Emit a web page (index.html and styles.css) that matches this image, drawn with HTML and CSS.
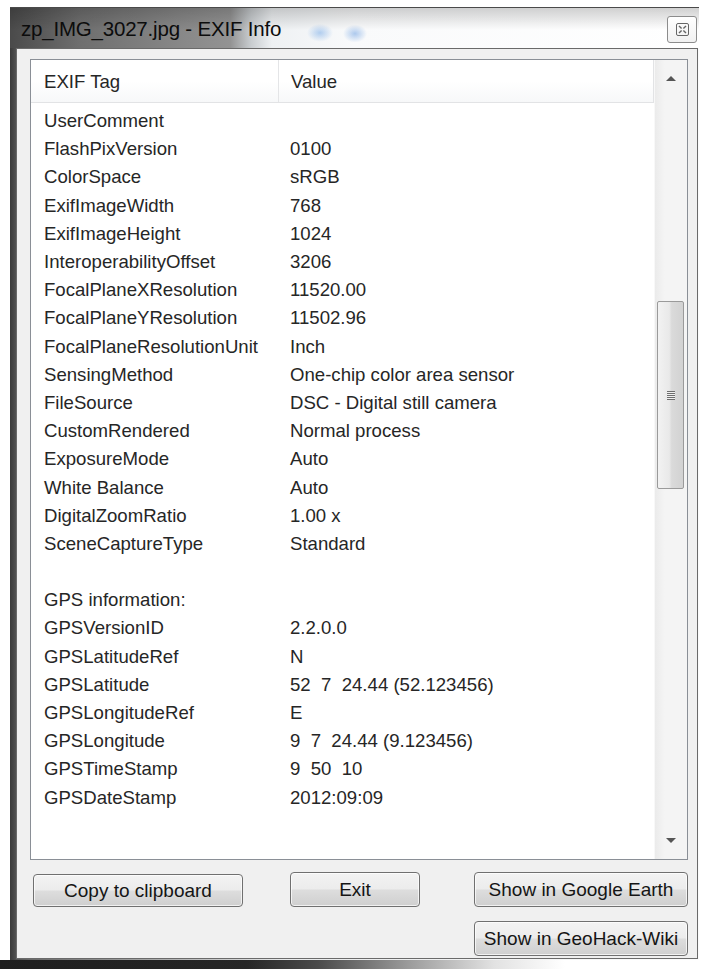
FILE: index.html
```html
<!DOCTYPE html>
<html lang="en">
<head>
<meta charset="utf-8">
<title>zp_IMG_3027.jpg - EXIF Info</title>
<link rel="stylesheet" href="styles.css">
</head>
<body>
<div class="window">
  <div class="titlebar">
    <span class="title">zp_IMG_3027.jpg - EXIF Info</span>
    <button class="close" type="button" aria-label="Close">
      <svg width="13" height="13" viewBox="0 0 13 13">
        <rect x="0.5" y="0.5" width="12" height="12" rx="1.5" fill="none" stroke="#666"/>
        <path d="M3 3 L5.6 5.6 M10 3 L7.4 5.6 M3 10 L5.6 7.4 M10 10 L7.4 7.4" stroke="#666" stroke-width="1.4" fill="none"/>
      </svg>
    </button>
  </div>
  <div class="client">
    <div class="listview">
      <div class="list-main">
        <div class="list-header">
          <div class="hcell tag">EXIF Tag</div>
          <div class="hcell value">Value</div>
        </div>
        <div class="rows">
          <div class="row"><span class="tag">UserComment</span><span class="value"></span></div>
          <div class="row"><span class="tag">FlashPixVersion</span><span class="value">0100</span></div>
          <div class="row"><span class="tag">ColorSpace</span><span class="value">sRGB</span></div>
          <div class="row"><span class="tag">ExifImageWidth</span><span class="value">768</span></div>
          <div class="row"><span class="tag">ExifImageHeight</span><span class="value">1024</span></div>
          <div class="row"><span class="tag">InteroperabilityOffset</span><span class="value">3206</span></div>
          <div class="row"><span class="tag">FocalPlaneXResolution</span><span class="value">11520.00</span></div>
          <div class="row"><span class="tag">FocalPlaneYResolution</span><span class="value">11502.96</span></div>
          <div class="row"><span class="tag">FocalPlaneResolutionUnit</span><span class="value">Inch</span></div>
          <div class="row"><span class="tag">SensingMethod</span><span class="value">One-chip color area sensor</span></div>
          <div class="row"><span class="tag">FileSource</span><span class="value">DSC - Digital still camera</span></div>
          <div class="row"><span class="tag">CustomRendered</span><span class="value">Normal process</span></div>
          <div class="row"><span class="tag">ExposureMode</span><span class="value">Auto</span></div>
          <div class="row"><span class="tag">White Balance</span><span class="value">Auto</span></div>
          <div class="row"><span class="tag">DigitalZoomRatio</span><span class="value">1.00 x</span></div>
          <div class="row"><span class="tag">SceneCaptureType</span><span class="value">Standard</span></div>
          <div class="row"><span class="tag"></span><span class="value"></span></div>
          <div class="row"><span class="tag">GPS information:</span><span class="value"></span></div>
          <div class="row"><span class="tag">GPSVersionID</span><span class="value">2.2.0.0</span></div>
          <div class="row"><span class="tag">GPSLatitudeRef</span><span class="value">N</span></div>
          <div class="row"><span class="tag">GPSLatitude</span><span class="value">52 &nbsp;7 &nbsp;24.44 (52.123456)</span></div>
          <div class="row"><span class="tag">GPSLongitudeRef</span><span class="value">E</span></div>
          <div class="row"><span class="tag">GPSLongitude</span><span class="value">9 &nbsp;7 &nbsp;24.44 (9.123456)</span></div>
          <div class="row"><span class="tag">GPSTimeStamp</span><span class="value">9 &nbsp;50 &nbsp;10</span></div>
          <div class="row"><span class="tag">GPSDateStamp</span><span class="value">2012:09:09</span></div>
        </div>
      </div>
      <div class="scrollbar">
        <div class="arrow up"></div>
        <div class="track">
          <div class="thumb"><span class="grip"></span></div>
        </div>
        <div class="arrow down"></div>
      </div>
    </div>
    <div class="buttons">
      <button class="btn copy" type="button">Copy to clipboard</button>
      <button class="btn exit" type="button">Exit</button>
      <button class="btn earth" type="button">Show in Google Earth</button>
      <button class="btn wiki" type="button">Show in GeoHack-Wiki</button>
    </div>
  </div>
</div>
<div class="taskbar"></div>
</body>
</html>
```

FILE: styles.css
```css
html, body {
  margin: 0;
  padding: 0;
}

body {
  width: 706px;
  height: 969px;
  overflow: hidden;
  background: #ffffff;
  font-family: "Liberation Sans", Arial, sans-serif;
  color: #262626;
}

/* Aero window frame: dark glass on the left, pale on the right */
.window {
  margin: 7px 0 0 10px;
  width: 689px;
  height: 953px;
  box-sizing: border-box;
  display: flex;
  flex-direction: column;
  border-top: 1px solid #4a4a4a;
  background: linear-gradient(to right, #3a3a3a 0, #555 1%, #6a6a6a 3%, #e9ebec 40%, #fbfbfb 100%);
}

.titlebar {
  height: 40px;
  flex: none;
  display: flex;
  align-items: center;
  justify-content: space-between;
  padding: 0 2px 0 11px;
  background:
    radial-gradient(ellipse 13px 9px at 310px 62%, rgba(110, 165, 230, 0.5), rgba(110, 165, 230, 0) 100%),
    radial-gradient(ellipse 12px 9px at 345px 64%, rgba(110, 160, 225, 0.55), rgba(110, 160, 225, 0) 100%),
    linear-gradient(to bottom, rgba(0, 0, 0, 0.18), rgba(255, 255, 255, 0) 55%),
    linear-gradient(to right, #4a4a4a 0, #6e6e6e 10%, #888888 25%, #939393 32%, #c9cdd0 35%, #eef1f3 38%, #f9fafb 50%, #ffffff 100%);
}

.title {
  font-size: 20.5px;
  color: #0c0c0c;
  letter-spacing: -0.2px;
  padding-top: 2px;
}

.close {
  width: 30px;
  height: 27px;
  margin: 2px 0 0 0;
  padding: 0;
  border: 1px solid #8c8c8c;
  border-radius: 3px;
  background: linear-gradient(to bottom, #ffffff, #f1f1f1);
  display: flex;
  align-items: center;
  justify-content: center;
}

.close svg {
  display: block;
}

.client {
  flex: 1;
  margin: 0 1px 1px 6px;
  border: 1px solid #6a6a6a;
  background: #f0f0f0;
  padding: 10px 9px 0 13px;
  display: flex;
  flex-direction: column;
}

/* List view with the EXIF table */
.listview {
  height: 801px;
  box-sizing: border-box;
  border: 1px solid #8a8f96;
  background: #ffffff;
  display: flex;
}

.list-main {
  flex: 1;
  display: flex;
  flex-direction: column;
  min-width: 0;
}

.list-header {
  height: 42px;
  width: 622px;
  display: grid;
  grid-template-columns: 248px 1fr;
  background: linear-gradient(to bottom, #ffffff 0, #ffffff 50%, #f7f8f9 100%);
  border-bottom: 1px solid #e2e3e5;
  border-right: 1px solid #e2e3e5;
}

.hcell {
  display: flex;
  align-items: center;
  font-size: 18.6px;
  color: #262626;
  padding-top: 2px;
}

.hcell.tag {
  padding-left: 13px;
  border-right: 1px solid #e4e5e7;
}

.hcell.value {
  padding-left: 12px;
}

.rows {
  padding-top: 4px;
}

.row {
  height: 28.2px;
  display: grid;
  grid-template-columns: 248px 1fr;
  align-items: center;
  font-size: 18.6px;
  white-space: pre;
}

.row .tag {
  padding-left: 13px;
}

.row .value {
  padding-left: 11px;
}

/* Vertical scroll bar */
.scrollbar {
  width: 32px;
  flex: none;
  display: flex;
  flex-direction: column;
  background: linear-gradient(to right, #ebebeb 0, #f4f4f4 30%, #f4f4f4 100%);
  border-left: 1px solid #f8f8f8;
}

.arrow {
  height: 40px;
  flex: none;
  position: relative;
}

.arrow::after {
  content: "";
  position: absolute;
  left: 50%;
  top: 50%;
  margin-left: -5px;
  border-left: 5px solid transparent;
  border-right: 5px solid transparent;
}

.arrow.up::after {
  margin-top: -4px;
  border-bottom: 5px solid #555;
}

.arrow.down::after {
  margin-top: -1px;
  border-top: 5px solid #555;
}

.track {
  flex: 1;
  padding-top: 201px;
}

.thumb {
  margin: 0 3px 0 2px;
  height: 188px;
  box-sizing: border-box;
  border: 1px solid #9a9a9a;
  border-radius: 2px;
  background: linear-gradient(to right, #f2f2f2 0, #e9e9e9 45%, #dadada 55%, #d2d2d2 100%);
  display: flex;
  align-items: center;
  justify-content: center;
}

.grip {
  width: 8px;
  height: 9px;
  background: repeating-linear-gradient(to bottom, #6e6e6e 0, #6e6e6e 1px, #f0f0f0 1px, #f0f0f0 2px);
}

/* Dialog buttons */
.buttons {
  margin-top: 12px;
  display: grid;
  grid-template-columns: 210px 47px 130px 54px 214px;
  grid-template-rows: 35px 35px;
  row-gap: 14px;
  margin-left: 3px;
}

.btn {
  font-family: "Liberation Sans", Arial, sans-serif;
  font-size: 19px;
  color: #151515;
  padding: 0;
  border: 1px solid #707070;
  border-radius: 4px;
  background: linear-gradient(to bottom, #f3f3f3 0, #ececec 48%, #dddddd 52%, #cfcfcf 100%);
  box-shadow: inset 0 0 0 1px rgba(255, 255, 255, 0.7);
}

.btn.copy {
  grid-column: 1;
  grid-row: 1;
  margin-top: 2px;
}

.btn.exit {
  grid-column: 3;
  grid-row: 1;
}

.btn.earth {
  grid-column: 5;
  grid-row: 1;
}

.btn.wiki {
  grid-column: 5;
  grid-row: 2;
}

.taskbar {
  height: 9px;
  background: linear-gradient(to right, #1e1e1e 0, #262626 35%, #4a4a4a 45%, #9c9c9c 58%, #e2e2e2 70%, #ffffff 80%);
}
```
